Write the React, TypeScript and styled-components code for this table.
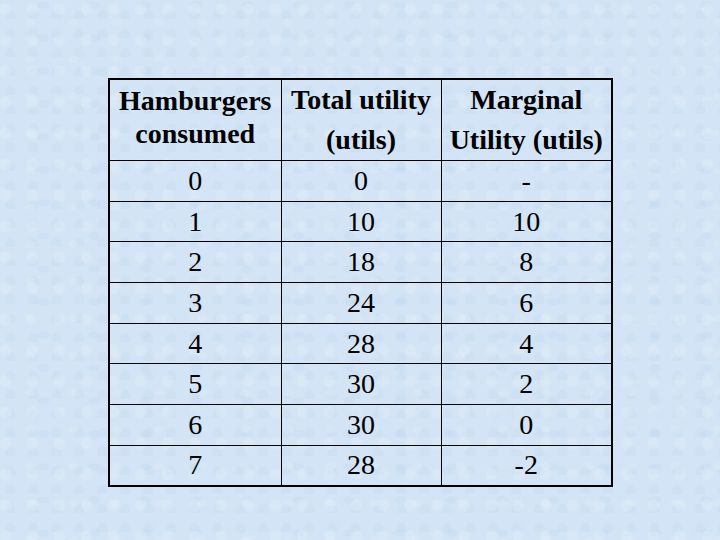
import React from "react";
import styled, { createGlobalStyle } from "styled-components";

const Global = createGlobalStyle`
  html, body { margin: 0; padding: 0; }
  body {
    width: 720px;
    height: 540px;
    overflow: hidden;
    background-color: #d2e4f5;
    background-image:
      radial-gradient(ellipse at 20% 30%, rgba(255,255,255,0.14) 0 5px, transparent 7px),
      radial-gradient(ellipse at 70% 60%, rgba(255,255,255,0.12) 0 4px, transparent 6px),
      radial-gradient(ellipse at 45% 85%, rgba(160,195,228,0.10) 0 4px, transparent 6px),
      radial-gradient(ellipse at 85% 15%, rgba(160,195,228,0.09) 0 5px, transparent 7px);
    background-size: 27px 31px, 43px 37px, 23px 19px, 51px 33px;
  }
`;

const Page = styled.div`
  width: 720px;
  height: 540px;
  box-sizing: border-box;
  padding: 78px 0 0 108px;
`;

const Table = styled.table`
  border-collapse: collapse;
  border: 2px solid #000;
  font-family: "Liberation Serif", "Times New Roman", "DejaVu Serif", serif;
  color: #000;
`;

const HeadRow = styled.tr`
  height: 79px;
`;

const HeadCell = styled.th<{ $lh: number; $w: number; $pt: number }>`
  width: ${(p) => p.$w}px;
  box-sizing: border-box;
  padding: ${(p) => p.$pt}px 0 0 0;
  vertical-align: top;
  border: 1px solid #000;
  font-size: 28px;
  font-weight: bold;
  line-height: ${(p) => p.$lh}px;
  text-align: center;
  white-space: nowrap;
`;

const Row = styled.tr`
  height: 40.7px;
`;

const Cell = styled.td`
  padding: 0;
  border: 1px solid #000;
  font-size: 28px;
  line-height: 30px;
  text-align: center;
`;

const rows: [string, string, string][] = [
  ["0", "0", "-"],
  ["1", "10", "10"],
  ["2", "18", "8"],
  ["3", "24", "6"],
  ["4", "28", "4"],
  ["5", "30", "2"],
  ["6", "30", "0"],
  ["7", "28", "-2"],
];

export default function App() {
  return (
    <>
      <Global />
      <Page>
        <Table>
          <thead>
            <HeadRow>
              <HeadCell $w={172} $lh={33} $pt={4}>
                Hamburgers
                <br />
                consumed
              </HeadCell>
              <HeadCell $w={160} $lh={40} $pt={0}>
                Total utility
                <br />
                (utils)
              </HeadCell>
              <HeadCell $w={171} $lh={40} $pt={0}>
                Marginal
                <br />
                Utility (utils)
              </HeadCell>
            </HeadRow>
          </thead>
          <tbody>
            {rows.map((r, i) => (
              <Row key={i}>
                {r.map((c, j) => (
                  <Cell key={j}>{c}</Cell>
                ))}
              </Row>
            ))}
          </tbody>
        </Table>
      </Page>
    </>
  );
}
